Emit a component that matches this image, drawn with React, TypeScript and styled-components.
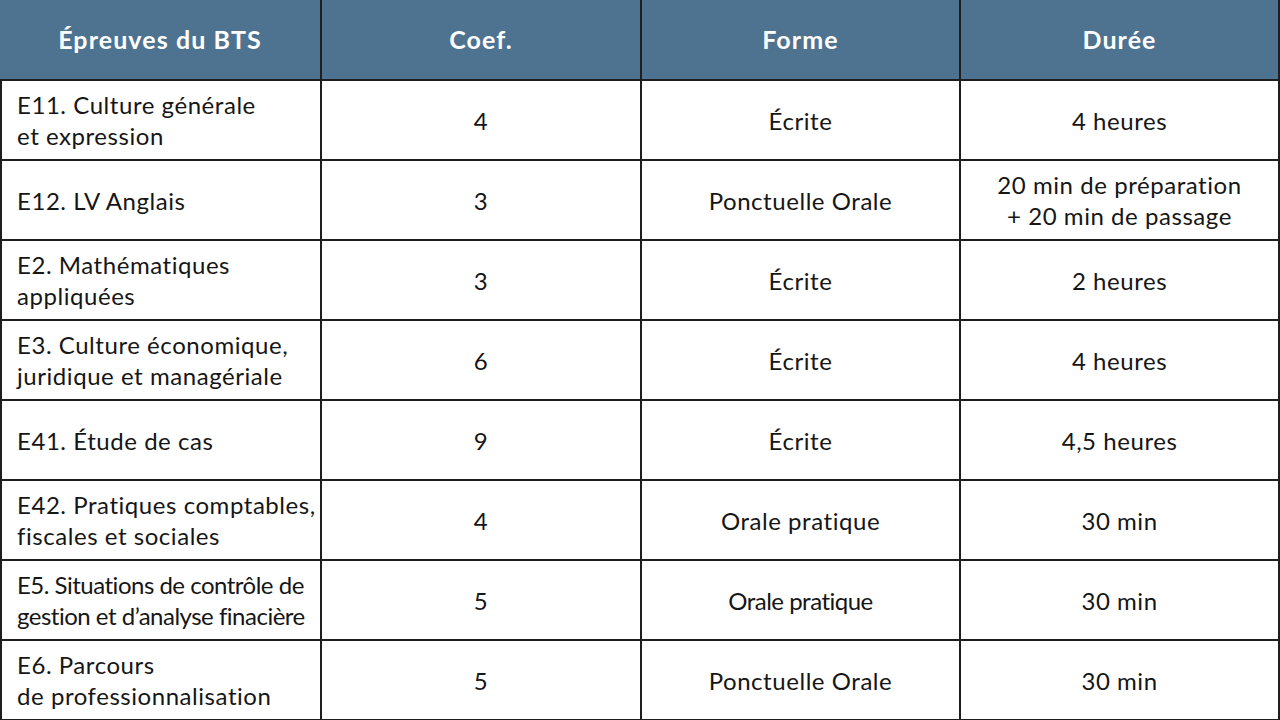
import styled, { createGlobalStyle } from 'styled-components';

const GlobalStyle = createGlobalStyle`
  html, body {
    margin: 0;
    padding: 0;
    background: #ffffff;
  }
  body {
    font-family: Lato, "Open Sans", sans-serif;
  }
`;

const Grid = styled.div`
  display: grid;
  width: 1280px;
  height: 720px;
  box-sizing: border-box;
  grid-template-columns: 320px 318px 317px 317px;
  grid-template-rows: 79px repeat(8, 78px);
  gap: 2px;
  padding: 0 2px 1px 0;
  background: #1f1f1f;
`;

const HeadCell = styled.div`
  display: flex;
  align-items: center;
  justify-content: center;
  padding-bottom: 2px;
  background: #4e7391;
  color: #ffffff;
  font-size: 25px;
  font-weight: 700;
  letter-spacing: 1.1px;
`;

const Cell = styled.div<{ $left?: boolean; $tight?: boolean }>`
  display: flex;
  align-items: center;
  justify-content: ${p => (p.$left ? 'flex-start' : 'center')};
  text-align: ${p => (p.$left ? 'left' : 'center')};
  padding: ${p => (p.$left ? '0 0 0 17px' : '0')};
  background: #ffffff;
  color: #161616;
  font-size: 24px;
  line-height: 31px;
  white-space: nowrap;
  letter-spacing: ${p => (p.$tight ? '-0.5px' : '0.55px')};
  box-shadow: ${p => (p.$left ? 'inset 2px 0 0 #1f1f1f' : 'none')};
`;

const Line = styled.div`
  white-space: nowrap;
`;

interface Row {
  epreuve: string[];
  coef: number;
  forme: string;
  duree: string[];
  tight?: boolean;
}

const rows: Row[] = [
  { epreuve: ['E11. Culture générale', 'et expression'], coef: 4, forme: 'Écrite', duree: ['4 heures'] },
  { epreuve: ['E12. LV Anglais'], coef: 3, forme: 'Ponctuelle Orale', duree: ['20 min de préparation', '+ 20 min de passage'] },
  { epreuve: ['E2. Mathématiques', 'appliquées'], coef: 3, forme: 'Écrite', duree: ['2 heures'] },
  { epreuve: ['E3. Culture économique,', 'juridique et managériale'], coef: 6, forme: 'Écrite', duree: ['4 heures'] },
  { epreuve: ['E41. Étude de cas'], coef: 9, forme: 'Écrite', duree: ['4,5 heures'] },
  { epreuve: ['E42. Pratiques comptables,', 'fiscales et sociales'], coef: 4, forme: 'Orale pratique', duree: ['30 min'] },
  { epreuve: ['E5. Situations de contrôle de', 'gestion et d’analyse finacière'], coef: 5, forme: 'Orale pratique', duree: ['30 min'], tight: true },
  { epreuve: ['E6. Parcours', 'de professionnalisation'], coef: 5, forme: 'Ponctuelle Orale', duree: ['30 min'] },
];

function Lines({ lines }: { lines: string[] }) {
  return (
    <div>
      {lines.map((l, i) => (
        <Line key={i}>{l}</Line>
      ))}
    </div>
  );
}

export default function App() {
  return (
    <>
      <GlobalStyle />
      <Grid>
        <HeadCell>Épreuves du BTS</HeadCell>
        <HeadCell>Coef.</HeadCell>
        <HeadCell>Forme</HeadCell>
        <HeadCell>Durée</HeadCell>
        {rows.map((r, i) => (
          <>
            <Cell key={`e${i}`} $left $tight={r.tight}><Lines lines={r.epreuve} /></Cell>
            <Cell key={`c${i}`}>{r.coef}</Cell>
            <Cell key={`f${i}`} $tight={r.tight}>{r.forme}</Cell>
            <Cell key={`d${i}`}><Lines lines={r.duree} /></Cell>
          </>
        ))}
      </Grid>
    </>
  );
}
